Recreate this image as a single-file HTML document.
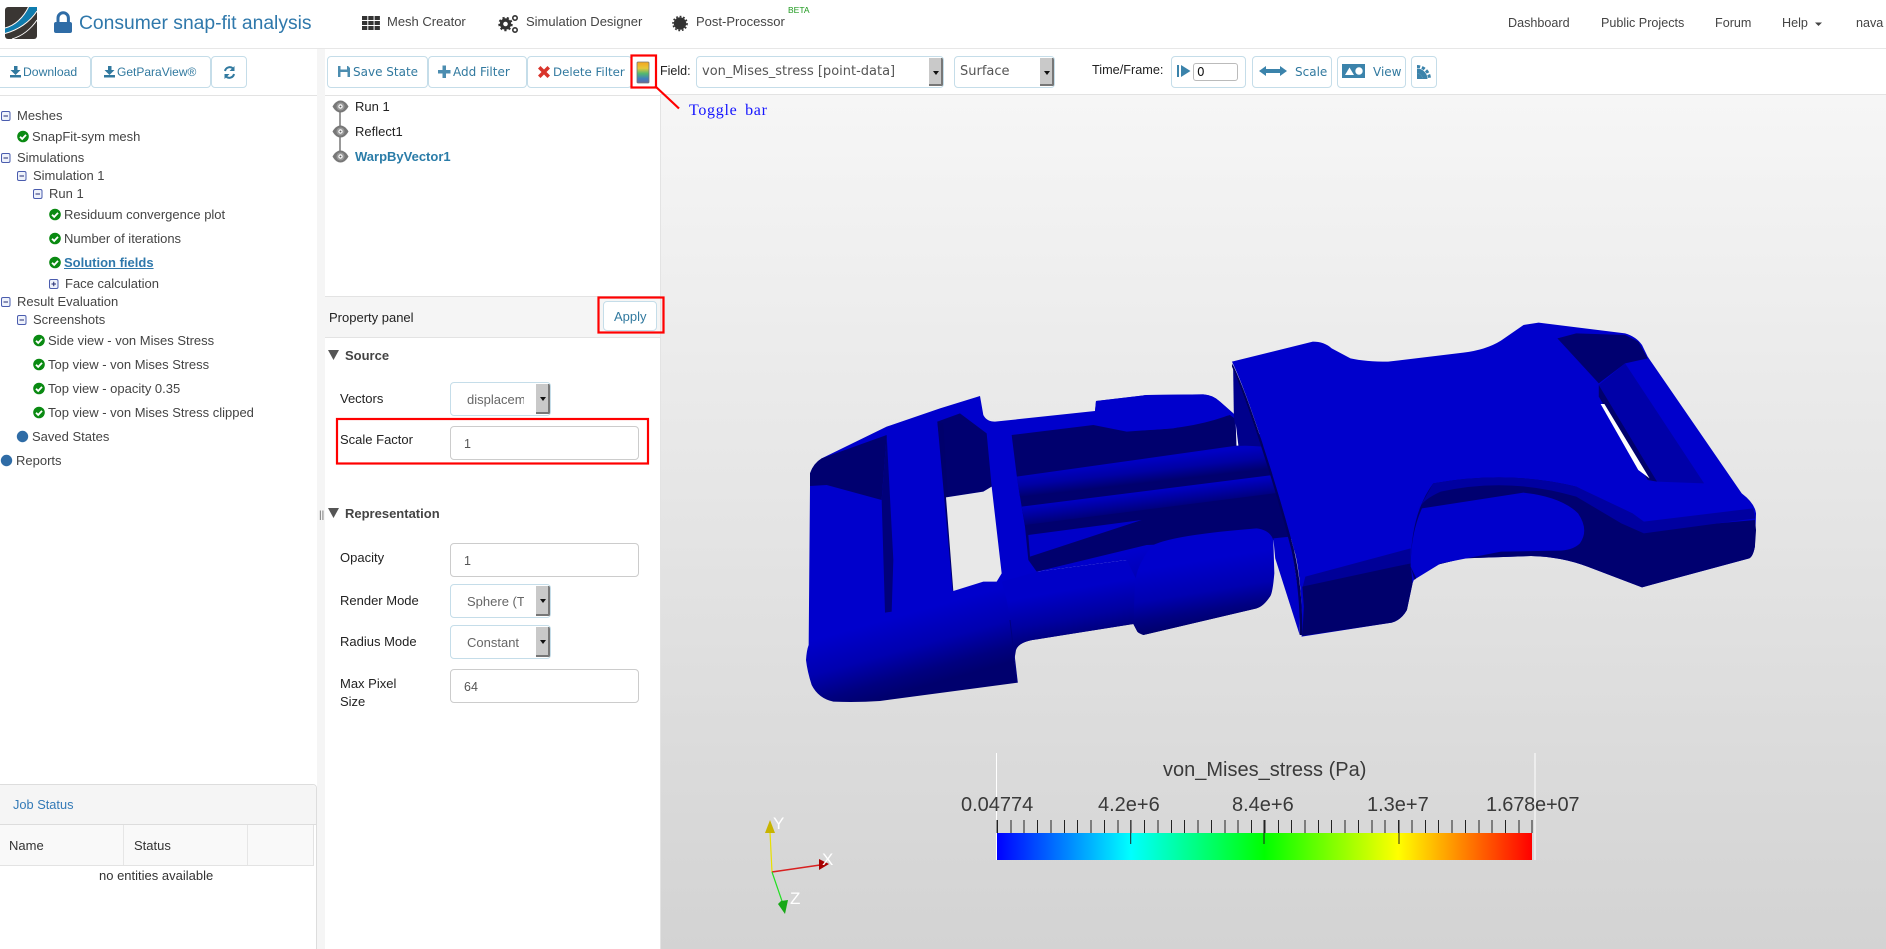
<!DOCTYPE html>
<html><head><meta charset="utf-8"><title>Consumer snap-fit analysis</title>
<style>
html,body{margin:0;padding:0;background:#fff;width:1886px;height:949px;overflow:hidden}
body{position:relative;font-family:"Liberation Sans",sans-serif;font-size:13px;color:#444}
.a{position:absolute}
.t{position:absolute;white-space:nowrap;line-height:20px;height:20px}
.nav{font-size:13px;color:#444}
.btn{position:absolute;box-sizing:border-box;top:56px;height:32px;background:#fff;border:1px solid #c5dde9;border-radius:4px}
.tb{font-family:"DejaVu Sans",sans-serif;font-size:12px;color:#31799f}
.dl{font-size:12px;color:#31799f}
.lb{color:#222;font-size:13px}
.sel{position:absolute;box-sizing:border-box;height:34px;background:#fff;border:1px solid #c5dde9;border-radius:4px;overflow:hidden}
.sel i{position:absolute;right:0;top:1px;bottom:1px;width:14px;background:#c9c9c9;border-right:2px solid #777;border-bottom:2px solid #777;box-sizing:border-box}
.sel i:after{content:"";position:absolute;left:4px;top:13px;border-left:3px solid transparent;border-right:3px solid transparent;border-top:4px solid #111}
.sel span{position:absolute;left:16px;top:7px;line-height:20px;white-space:nowrap;color:#666;font-size:13px}
.inp{position:absolute;box-sizing:border-box;left:450px;width:189px;height:34px;background:#fff;border:1px solid #ccc;border-radius:4px;color:#555;font-size:12.5px;line-height:34px;padding-left:13px}
.sel span.mono{font-family:"DejaVu Sans",sans-serif;font-size:13px;color:#555;left:5px;top:5px}
.bold{font-weight:bold;color:#444}
.sc{font-size:20px;color:#3a3a3a}
</style></head><body>

<!-- panels -->
<div class="a" style="left:0;top:48px;width:1886px;height:1px;background:#e7e7e7"></div>
<div class="a" style="left:317px;top:49px;width:8px;height:900px;background:#f5f5f5"></div>
<div class="a" style="left:0;top:95px;width:317px;height:1px;background:#e3e3e3"></div>
<div class="a" style="left:325px;top:95px;width:335px;height:1px;background:#e3e3e3"></div>
<div class="a" style="left:660px;top:94px;width:1226px;height:1px;background:#e3e3e3"></div>
<div class="a" style="left:660px;top:95px;width:1226px;height:854px;background:linear-gradient(#f6f6f6,#d3d3d3);border-left:1px solid #e3e3e3;box-sizing:border-box"></div>
<div class="a" style="left:325px;top:296px;width:335px;height:42px;box-sizing:border-box;background:#f5f5f5;border-top:1px solid #e3e3e3;border-bottom:1px solid #e3e3e3"></div>

<!-- nav -->
<div class="t" style="left:79px;top:14px;font-size:19.3px;color:#2f78ab">Consumer snap-fit analysis</div>
<div class="t nav" style="left:387px;top:12px">Mesh Creator</div>
<div class="t nav" style="left:526px;top:12px">Simulation Designer</div>
<div class="t nav" style="left:696px;top:12px">Post-Processor</div>
<div class="t" style="left:788px;top:0px;font-size:8.5px;color:#1f9a1f">BETA</div>
<div class="t nav" style="left:1508px;top:13px;font-size:12.6px">Dashboard</div>
<div class="t nav" style="left:1601px;top:13px;font-size:12.6px">Public Projects</div>
<div class="t nav" style="left:1715px;top:13px;font-size:12.6px">Forum</div>
<div class="t nav" style="left:1782px;top:13px;font-size:12.6px">Help</div>
<div class="t nav" style="left:1856px;top:13px;font-size:12.6px">nava</div>

<!-- left toolbar -->
<div class="btn" style="left:-6px;width:97px"></div>
<div class="btn" style="left:91px;width:120px"></div>
<div class="btn" style="left:211px;width:36px"></div>
<div class="t dl" style="left:23px;top:62px;font-size:12.2px">Download</div>
<div class="t dl" style="left:117px;top:62px">GetParaView®</div>

<!-- tree -->
<div class="t" style="left:17px;top:106px">Meshes</div>
<div class="t" style="left:32px;top:127px">SnapFit-sym mesh</div>
<div class="t" style="left:17px;top:148px">Simulations</div>
<div class="t" style="left:33px;top:166px">Simulation 1</div>
<div class="t" style="left:49px;top:184px">Run 1</div>
<div class="t" style="left:64px;top:205px">Residuum convergence plot</div>
<div class="t" style="left:64px;top:229px">Number of iterations</div>
<div class="t" style="left:64px;top:253px;font-weight:bold;color:#2f78ab;text-decoration:underline">Solution fields</div>
<div class="t" style="left:65px;top:274px">Face calculation</div>
<div class="t" style="left:17px;top:292px">Result Evaluation</div>
<div class="t" style="left:33px;top:310px">Screenshots</div>
<div class="t" style="left:48px;top:331px">Side view - von Mises Stress</div>
<div class="t" style="left:48px;top:355px">Top view - von Mises Stress</div>
<div class="t" style="left:48px;top:379px">Top view - opacity 0.35</div>
<div class="t" style="left:48px;top:403px">Top view - von Mises Stress clipped</div>
<div class="t" style="left:32px;top:427px">Saved States</div>
<div class="t" style="left:16px;top:451px">Reports</div>

<!-- job status -->
<div class="a" style="left:-4px;top:784px;width:321px;height:175px;box-sizing:border-box;border:1px solid #ddd;border-radius:4px;background:#fff"></div>
<div class="a" style="left:-3px;top:785px;width:319px;height:40px;background:#f5f5f5;border-bottom:1px solid #ddd;box-sizing:border-box;border-radius:4px 4px 0 0"></div>
<div class="a" style="left:0;top:825px;width:314px;height:41px;background:#f9f9f9;border-bottom:1px solid #e3e3e3;box-sizing:border-box;border-right:1px solid #e3e3e3"></div>
<div class="a" style="left:123px;top:825px;width:1px;height:40px;background:#e6e6e6"></div>
<div class="a" style="left:247px;top:825px;width:1px;height:40px;background:#e6e6e6"></div>
<div class="t" style="left:13px;top:795px;color:#337ab7;font-size:12.8px">Job Status</div>
<div class="t" style="left:9px;top:836px;color:#333">Name</div>
<div class="t" style="left:134px;top:836px;color:#333">Status</div>
<div class="t" style="left:99px;top:866px;color:#333;font-size:13px">no entities available</div>

<!-- filter toolbar -->
<div class="btn" style="left:327px;width:101px"></div>
<div class="btn" style="left:428px;width:99px"></div>
<div class="btn" style="left:527px;width:105px"></div>
<div class="t tb" style="left:353px;top:62px">Save State</div>
<div class="t tb" style="left:453px;top:62px">Add Filter</div>
<div class="t tb" style="left:553px;top:62px;font-size:11.8px">Delete Filter</div>

<!-- pipeline -->
<div class="t lb" style="left:355px;top:97px">Run 1</div>
<div class="t lb" style="left:355px;top:122px">Reflect1</div>
<div class="t" style="left:355px;top:147px;font-weight:bold;color:#2a7ca8">WarpByVector1</div>

<!-- property panel -->
<div class="t lb" style="left:329px;top:308px">Property panel</div>
<div class="btn" style="left:603px;top:301px;height:30px;width:54px"></div>
<div class="t" style="left:614px;top:307px;color:#31799f;font-size:13px">Apply</div>
<div class="t bold" style="left:345px;top:346px">Source</div>
<div class="t lb" style="left:340px;top:389px">Vectors</div>
<div class="sel" style="left:450px;top:382px;width:101px"><span style="width:57px;overflow:hidden">displacement</span><i></i></div>
<div class="t lb" style="left:340px;top:430px">Scale Factor</div>
<div class="inp" style="top:426px">1</div>
<div class="t bold" style="left:345px;top:504px">Representation</div>
<div class="t lb" style="left:340px;top:548px">Opacity</div>
<div class="inp" style="top:543px">1</div>
<div class="t lb" style="left:340px;top:591px">Render Mode</div>
<div class="sel" style="left:450px;top:584px;width:101px"><span style="width:57px;overflow:hidden">Sphere (Texture)</span><i></i></div>
<div class="t lb" style="left:340px;top:632px">Radius Mode</div>
<div class="sel" style="left:450px;top:625px;width:101px"><span style="width:57px;overflow:hidden">Constant</span><i></i></div>
<div class="t lb" style="left:340px;top:674px">Max Pixel</div>
<div class="t lb" style="left:340px;top:692px">Size</div>
<div class="inp" style="top:669px">64</div>
<div class="t" style="left:319px;top:506px;font-size:10px;color:#666">||</div>

<!-- top toolbar -->
<div class="t lb" style="left:660px;top:61px;font-size:12.5px">Field:</div>
<div class="sel" style="left:696px;top:56px;width:248px;height:32px"><span class="mono">von_Mises_stress [point-data]</span><i></i></div>
<div class="sel" style="left:954px;top:56px;width:101px;height:32px"><span class="mono">Surface</span><i></i></div>
<div class="t lb" style="left:1092px;top:60px;font-size:12.7px">Time/Frame:</div>
<div class="btn" style="left:1171px;width:75px"></div>
<div class="a" style="left:1193px;top:63px;width:45px;height:18px;box-sizing:border-box;border:1px solid #bbb;border-radius:3px;background:#fff;color:#111;font-size:12px;line-height:16px;padding-left:3px;font-family:'DejaVu Sans',sans-serif">0</div>
<div class="btn" style="left:1252px;width:80px"></div>
<div class="t tb" style="left:1295px;top:62px;font-size:12px">Scale</div>
<div class="btn" style="left:1337px;width:69px"></div>
<div class="t tb" style="left:1373px;top:62px;font-size:12px">View</div>
<div class="btn" style="left:1411px;width:26px"></div>

<!-- graphics -->
<svg class="a" style="left:0;top:0" width="1886" height="949" viewBox="0 0 1886 949">
<defs>
<symbol id="ck" viewBox="0 0 12 12"><circle cx="6" cy="6" r="5.8" fill="#0a8a12"/><path d="M3 6.200l2.200 2.200L9 4.400" fill="none" stroke="#fff" stroke-width="1.800"/></symbol>
<symbol id="mn" viewBox="0 0 10 10"><rect x=".5" y=".5" width="8.500" height="9" rx="1.500" fill="#eef2fb" stroke="#4a5cae"/><path d="M2.500 5h4.500" stroke="#222a70"/></symbol>
<symbol id="pl" viewBox="0 0 10 10"><rect x=".5" y=".5" width="8.500" height="9" rx="1.500" fill="#eef2fb" stroke="#4a5cae"/><path d="M2.500 5h4.500M4.750 2.700v4.600" stroke="#222a70"/></symbol>
<symbol id="eye" viewBox="0 0 17 13"><path d="M.5 6.500C3 2 6 .5 8.500.5s5.500 1.500 8 6c-2.500 4.500-5.500 6-8 6s-5.500-1.500-8-6z" fill="#777"/><circle cx="8.500" cy="6.500" r="4" fill="#9a9a9a"/><circle cx="8.500" cy="6.500" r="2.200" fill="#fff"/><circle cx="8.500" cy="6.500" r="1" fill="#666"/></symbol>
<linearGradient id="gm" gradientUnits="userSpaceOnUse" x1="350" y1="950" x2="410" y2="1165"><stop offset="0" stop-color="#0000cc"/><stop offset=".45" stop-color="#0000b0"/><stop offset=".8" stop-color="#000080"/><stop offset="1" stop-color="#00006e"/></linearGradient>
<linearGradient id="gl" gradientUnits="userSpaceOnUse" x1="860" y1="870" x2="885" y2="1010"><stop offset="0" stop-color="#0000c8"/><stop offset=".6" stop-color="#0000a0"/><stop offset="1" stop-color="#00007a"/></linearGradient>
<linearGradient id="gbp" gradientUnits="userSpaceOnUse" x1="1270" y1="780" x2="1300" y2="965"><stop offset="0" stop-color="#0000cc"/><stop offset=".5" stop-color="#0000b0"/><stop offset=".8" stop-color="#000084"/><stop offset="1" stop-color="#00006e"/></linearGradient>
<linearGradient id="gb1" gradientUnits="userSpaceOnUse" x1="1000" y1="489" x2="1008" y2="559"><stop offset="0" stop-color="#0000c4"/><stop offset=".5" stop-color="#0000a4"/><stop offset="1" stop-color="#00006e"/></linearGradient>
<linearGradient id="gb2" gradientUnits="userSpaceOnUse" x1="1000" y1="583" x2="1008" y2="650"><stop offset="0" stop-color="#0000c8"/><stop offset=".5" stop-color="#00009c"/><stop offset="1" stop-color="#00006e"/></linearGradient>
<linearGradient id="tog" x1="0" y1="0" x2="0" y2="1"><stop offset="0" stop-color="#f5a51e"/><stop offset=".3" stop-color="#e6c83a"/><stop offset=".55" stop-color="#52b870"/><stop offset=".8" stop-color="#3f7fc0"/><stop offset="1" stop-color="#6a6a9a"/></linearGradient>
<linearGradient id="sbar" x1="0" y1="0" x2="1" y2="0"><stop offset="0" stop-color="#00f"/><stop offset=".25" stop-color="#0ff"/><stop offset=".5" stop-color="#0f0"/><stop offset=".75" stop-color="#ff0"/><stop offset="1" stop-color="#f00"/></linearGradient>
</defs>

<!-- logo -->
<rect x="5" y="7" width="32" height="32" rx="3" fill="#3a3633"/>
<path d="M5 28.500C15 26 24 18 29 7h8v3C30 21 18 29.500 5 33z" fill="#0f7cae"/>
<path d="M5 28C15 25.500 23.500 17.500 28.500 7" fill="none" stroke="#fff" stroke-width="1"/>
<path d="M5 33.500C18 30 30 22 37 11" fill="none" stroke="#fff" stroke-width="1"/>
<path d="M12 39C22 36 31 29 37 20" fill="none" stroke="#fff" stroke-width="1"/>
<!-- lock -->
<path d="M58 23v-5a5.200 5.200 0 0 1 10.400 0v5" fill="none" stroke="#2f6ca6" stroke-width="3"/>
<rect x="54" y="22" width="18" height="11" rx="2" fill="#2f6ca6"/>
<!-- grid -->
<g fill="#333"><rect x="362" y="16" width="5.300" height="4"/><rect x="368.300" y="16" width="5.300" height="4"/><rect x="374.600" y="16" width="5.300" height="4"/><rect x="362" y="21" width="5.300" height="4"/><rect x="368.300" y="21" width="5.300" height="4"/><rect x="374.600" y="21" width="5.300" height="4"/><rect x="362" y="26" width="5.300" height="4"/><rect x="368.300" y="26" width="5.300" height="4"/><rect x="374.600" y="26" width="5.300" height="4"/></g>
<!-- gears -->
<circle cx="505.500" cy="24" r="4" fill="none" stroke="#333" stroke-width="3.400"/>
<circle cx="505.500" cy="24" r="6.300" fill="none" stroke="#333" stroke-width="1.800" stroke-dasharray="2.200 2.200"/>
<circle cx="515" cy="18" r="2.200" fill="none" stroke="#333" stroke-width="1.600"/>
<circle cx="515" cy="30" r="2.200" fill="none" stroke="#333" stroke-width="1.600"/>
<!-- post gear -->
<circle cx="680" cy="23.500" r="6.200" fill="#333"/>
<circle cx="680" cy="23.500" r="7" fill="none" stroke="#333" stroke-width="1.600" stroke-dasharray="1.800 1.800"/>
<!-- caret -->
<path d="M1815 22.500h7l-3.500 3.500z" fill="#444"/>

<!-- left toolbar icons -->
<g fill="#31799f"><path d="M14 66h3.500v4h3l-5 5-5-5h3.500z"/><rect x="10" y="75" width="11" height="2.500"/><path d="M108 66h3.500v4h3l-5 5-5-5h3.500z"/><rect x="104" y="75" width="11" height="2.500"/></g>
<g fill="none" stroke="#31799f" stroke-width="2"><path d="M225 71a4.800 4.800 0 0 1 8-2.500"/><path d="M234 74a4.800 4.800 0 0 1-8 2.500"/></g>
<path d="M234.500 66v5h-5zM224.500 79v-5h5z" fill="#31799f"/>

<!-- tree icons -->
<use href="#mn" x="1" y="111" width="10" height="10"/>
<use href="#ck" x="17" y="130.500" width="12" height="12"/>
<use href="#mn" x="1" y="153" width="10" height="10"/>
<use href="#mn" x="17" y="171" width="10" height="10"/>
<use href="#mn" x="33" y="189" width="10" height="10"/>
<use href="#ck" x="49" y="208.500" width="12" height="12"/>
<use href="#ck" x="49" y="232.500" width="12" height="12"/>
<use href="#ck" x="49" y="256.500" width="12" height="12"/>
<use href="#pl" x="49" y="279" width="10" height="10"/>
<use href="#mn" x="1" y="297" width="10" height="10"/>
<use href="#mn" x="17" y="315" width="10" height="10"/>
<use href="#ck" x="33" y="334.500" width="12" height="12"/>
<use href="#ck" x="33" y="358.500" width="12" height="12"/>
<use href="#ck" x="33" y="382.500" width="12" height="12"/>
<use href="#ck" x="33" y="406.500" width="12" height="12"/>
<circle cx="22.500" cy="436.500" r="5.700" fill="#2f6ca6"/>
<circle cx="6.500" cy="460.500" r="5.700" fill="#2f6ca6"/>

<!-- filter toolbar icons -->
<path d="M338 66h10l2 2v9h-12z" fill="#4c8db0"/><rect x="340.500" y="66" width="6.500" height="3.500" fill="#fff"/><rect x="340.500" y="72" width="7" height="5" fill="#fff"/>
<path d="M438 70h4.500v-4.500h3.500V70h4.500v3.500H446V78h-3.500v-4.500H438z" fill="#4c8db0"/>
<path d="M538 68.500l2.500-2.500 3.500 3.500 3.500-3.500 2.500 2.500-3.500 3.500 3.500 3.500-2.500 2.500-3.500-3.500-3.500 3.500-2.500-2.500 3.500-3.500z" fill="#d9342b"/>
<!-- toggle -->
<rect x="637" y="62" width="12" height="21" rx="1" fill="url(#tog)" stroke="#777" stroke-width=".8"/>

<!-- pipeline eyes -->
<path d="M340 107v50" stroke="#999" stroke-width="2"/>
<use href="#eye" x="332" y="100" width="17" height="13"/>
<use href="#eye" x="332" y="125" width="17" height="13"/>
<use href="#eye" x="332" y="150" width="17" height="13"/>

<!-- section triangles -->
<path d="M328 350h11l-5.500 10z" fill="#555"/>
<path d="M328 508h11l-5.500 10z" fill="#555"/>

<!-- top toolbar icons -->
<rect x="1177" y="65" width="2" height="12" fill="#3b83ab"/><path d="M1181 65l9.500 6-9.500 6z" fill="#3b83ab"/>
<path d="M1259 71l7-5v3h14v-3l7 5-7 5v-3h-14v3z" fill="#3b83ab"/>
<rect x="1342" y="64" width="23" height="14" fill="#3b83ab"/><path d="M1345 75l4.500-7.500 4.500 7.500z" fill="#fff"/><circle cx="1359" cy="71" r="3.700" fill="#fff"/>
<path d="M1417 68.500a10.500 10.500 0 0 1 10.500 10.500h-5a5.500 5.500 0 0 0-5.500-5.500z" fill="#3b83ab"/>
<path d="M1417 73.500a5.500 5.500 0 0 1 5.500 5.500h-5.500z" fill="#3b83ab"/>
<path d="M1417 66.500a12.500 12.500 0 0 1 12.500 12.500" fill="none" stroke="#3b83ab" stroke-width="3" stroke-dasharray="3.200 1.800"/>

<!-- model left -->
<g transform="translate(780,300) scale(.33333)">
<path d="M90 520Q100 490 125 475L320 380 480 325 600 288 610 345Q620 365 645 365L945 333 948 303 1100 285 1270 283Q1300 285 1320 305L1360 340 1560 500V715L1480 720 1470 890 1430 925 1090 1005 1072 995 1060 972 770 1018Q715 1025 708 1050L703 1080 712 1148 300 1203Q230 1208 160 1205 115 1195 95 1155 82 1115 78 1080 80 1050 86 1035L90 560Z" fill="url(#gm)"/>
<!-- pockets -->
<path d="M90 558V520Q100 490 125 475L320 405 305 600 140 555Z" fill="#000070"/>
<path d="M305 600L320 405 340 780 335 935 315 938Z" fill="#00007a"/>
<path d="M472 365L540 340 620 400 635 560 610 575 498 592Z" fill="#000070"/>
<path d="M472 365L490 370 522 870 518 873Z" fill="#00006c"/>
<path d="M498 592L610 575 635 560 665 820 650 845H610L520 873Z" fill="#e8e8e8"/>
<!-- inner dark area -->
<path d="M695 405L940 375 1040 395 1180 385 1350 345 1560 500V715L1480 720 1100 735 770 815 745 780 735 680 725 620 720 590 710 525Z" fill="#00006e"/>
<!-- bars -->
<path d="M710 530L1370 437 1450 437 1560 470V500L720 590Z" fill="url(#gb1)"/>
<path d="M725 620L1480 525 1560 520V570L735 675Z" fill="url(#gb2)"/>
<path d="M745 705L1085 660 750 770Z" fill="#0000c8"/>
<path d="M770 815L1040 780 1030 790 790 822Z" fill="#f0f0f0"/>
<!-- top bump -->
<path d="M945 333L948 303 1100 285 1270 283Q1300 285 1320 305L1360 340Q1250 385 1100 390 1030 395 990 378L940 368Z" fill="#0000cc"/>
<!-- lower mid -->
<path d="M665 845L770 815 1040 780 1075 850 1060 972 770 1018Q715 1025 708 1050L680 900Z" fill="url(#gl)"/>
<!-- bump -->
<path d="M1065 850Q1070 790 1120 735 1180 705 1430 685 1470 690 1480 720L1483 820Q1478 880 1470 890 1450 920 1430 925L1090 1005Q1075 1000 1072 995L1060 972Z" fill="url(#gbp)"/>
<path d="M690 960L712 1148" stroke="#000080" stroke-width="3" fill="none"/>
</g>

<!-- model right -->
<g transform="translate(1200,300) scale(.3762,.33333)">
<path d="M195 715L240 710 265 900 265 1005 200 775Z" fill="#0000c8"/>
<path d="M88 195C130 300 150 380 165 440L100 435 90 350Z" fill="#00008c"/>
<path d="M95 370L102 437 97 437Z" fill="#fff"/>
<path d="M85 185L300 125Q330 125 350 145L400 175Q440 185 500 185L700 158Q760 150 800 122L860 75 900 68 1130 100Q1160 110 1175 135L1190 170 1440 580Q1475 610 1478 640L1475 740Q1470 770 1460 775L1175 862 1030 800Q960 770 880 768L700 775 610 800Q575 815 565 850L550 930Q535 960 510 968L270 1010 C275 870 255 760 250 750 200 540 130 290 85 185Z" fill="#0000cc"/>
<path d="M85 190C130 290 200 540 250 750 275 870 272 1005 272 1005L265 1005C268 870 243 750 243 750 195 540 125 300 85 200Z" fill="#000060"/>
<!-- lower body -->
<path d="M280 830L560 745 560 790 272 865Z" fill="#000098"/>
<path d="M272 860L560 790 565 850 550 930Q535 960 510 968L272 1008 276 920Z" fill="#00006c"/>
<!-- lip -->
<path d="M560 800Q560 640 620 550 820 510 1000 560L1150 650 1180 690 1475 660 1478 690 1475 740Q1470 770 1460 775L1175 862 1030 800Q960 770 880 768L700 775 610 800 570 840Z" fill="#000070"/>
<path d="M620 550Q820 510 1000 560L1150 640 1180 665 1470 625 1476 655 1180 700 1120 670 1000 590Q820 530 640 575 590 600 580 630Z" fill="#0000a0"/>
<path d="M590 625L860 578Q960 590 1005 640 1035 690 1010 730 990 752 950 752L800 755 640 790 575 835 560 800Q560 700 590 625Z" fill="#0000cc"/>
<!-- strap window -->
<path d="M950 115L1000 100 1130 105 1165 125 1190 175 1130 190 1060 250Z" fill="#000070"/>
<path d="M1060 255L1130 190 1340 550 1215 545Z" fill="#0000a8"/>
<path d="M1060 255L1215 545 1190 540 1060 290Z" fill="#00006c"/>
<path d="M1065 312L1075 312 1195 535 1165 510Z" fill="#fff"/>
</g>

<!-- scale bar -->
<path d="M996.500 753V860M1535 753V860" stroke="#fff" stroke-width="1" fill="none"/>
<rect x="997" y="833" width="535" height="27" fill="url(#sbar)"/>
<path d="M997 833V820M1130.700 844V820M1264 844V820M1399 844V820M1532 833V820" stroke="#222" fill="none"/>

<!-- axes -->
<path d="M772 872L770 832" stroke="#e8e000" stroke-width="1.200"/>
<path d="M770 820l-5 13h10z" fill="#c8b400"/>
<path d="M772 872L820 865" stroke="#d82020" stroke-width="1.400"/>
<path d="M829 864l-10-5v11z" fill="#a80000"/>
<path d="M772 872L783 904" stroke="#20e020" stroke-width="1.200"/>
<path d="M785 914l-7-10 3-3 7-1z" fill="#18a818"/>

<!-- callouts -->
<g fill="none" stroke="#f00" stroke-width="2.200">
<rect x="631.500" y="55.500" width="24.500" height="32"/>
<path d="M655 86L679 108.500"/>
<rect x="598.500" y="297.500" width="65" height="35"/>
<rect x="337" y="419" width="311" height="44.500"/>
</g>
</svg>

<div class="t" style="left:1163px;top:760px;font-size:20px;color:#3a3a3a">von_Mises_stress (Pa)</div>
<div class="t sc" style="left:961px;top:795px">0.04774</div>
<div class="t sc" style="left:1098px;top:795px">4.2e+6</div>
<div class="t sc" style="left:1232px;top:795px">8.4e+6</div>
<div class="t sc" style="left:1367px;top:795px">1.3e+7</div>
<div class="t sc" style="left:1486px;top:795px;letter-spacing:-.2px">1.678e+07</div>
<div class="a" style="left:997px;top:820px;width:535px;height:13px;background:repeating-linear-gradient(90deg,#222 0,#222 1px,transparent 1px,transparent 13.37px)"></div>
<div class="t" style="left:773px;top:814px;font-size:17px;color:#fff">Y</div>
<div class="t" style="left:822px;top:850px;font-size:17px;color:#fff">X</div>
<div class="t" style="left:790px;top:889px;font-size:17px;color:#fff">Z</div>
<div class="t" style="left:689px;top:101px;font-family:'Liberation Serif',serif;font-size:16px;color:#1414ff;word-spacing:3px;letter-spacing:.7px">Toggle bar</div>
</body></html>
